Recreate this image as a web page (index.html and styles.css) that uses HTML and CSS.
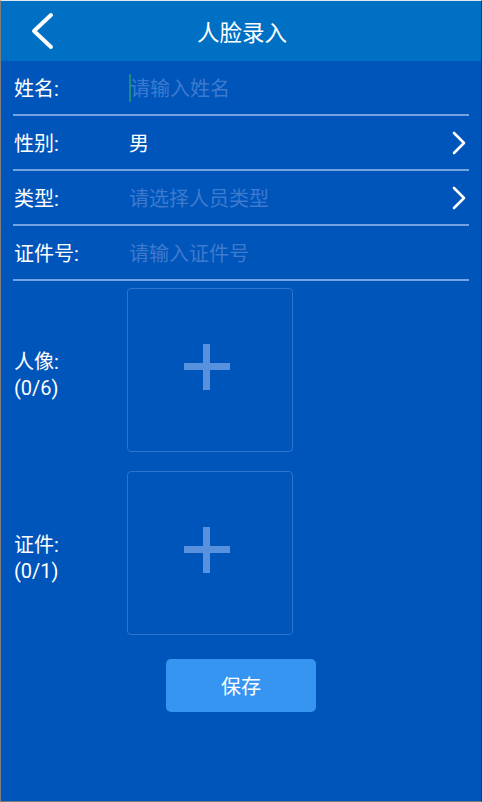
FILE: index.html
```html
<!DOCTYPE html>
<html lang="zh">
<head>
<meta charset="utf-8">
<title>人脸录入</title>
<link rel="stylesheet" href="styles.css">
</head>
<body>
<div class="screen">
  <header class="topbar">
    <span class="back">
      <svg width="26" height="38" viewBox="0 0 26 38"><polyline points="21,3 4,19 21,35" fill="none" stroke="#fff" stroke-width="4" stroke-linecap="round" stroke-linejoin="round"/></svg>
    </span>
    <h1 class="title">人脸录入</h1>
  </header>
  <div class="form">
    <div class="row">
      <span class="label">姓名:</span>
      <span class="value placeholder"><span class="cursor"></span>请输入姓名</span>
    </div>
    <div class="row">
      <span class="label">性别:</span>
      <span class="value">男</span>
      <span class="arrow"><svg width="14" height="24" viewBox="0 0 14 24"><polyline points="2,2 12,12 2,22" fill="none" stroke="#fff" stroke-width="2.6" stroke-linecap="round" stroke-linejoin="round"/></svg></span>
    </div>
    <div class="row">
      <span class="label">类型:</span>
      <span class="value placeholder">请选择人员类型</span>
      <span class="arrow"><svg width="14" height="24" viewBox="0 0 14 24"><polyline points="2,2 12,12 2,22" fill="none" stroke="#fff" stroke-width="2.6" stroke-linecap="round" stroke-linejoin="round"/></svg></span>
    </div>
    <div class="row">
      <span class="label">证件号:</span>
      <span class="value placeholder">请输入证件号</span>
    </div>
    <div class="photos">
      <div class="photo-row">
        <div class="plabel">人像:<br>(0/6)</div>
        <div class="box"><span class="plus"></span></div>
      </div>
      <div class="photo-row">
        <div class="plabel">证件:<br>(0/1)</div>
        <div class="box"><span class="plus"></span></div>
      </div>
    </div>
    <div class="actions">
      <button class="save">保存</button>
    </div>
  </div>
</div>
</body>
</html>
```
FILE: styles.css
```css
* { box-sizing: border-box; }
html, body { margin: 0; padding: 0; }
body {
  font-family: "Roboto", "Noto Sans CJK SC", sans-serif;
  background: #0055bb;
}
.screen {
  width: 482px;
  height: 802px;
  background: #0055bb;
  border-top: 1px solid #dfe6ee;
  border-left: 1px solid #7d7d7d;
  border-right: 1px solid #24385a;
  border-bottom: 1px solid #7a7a7a;
  color: #fff;
}
.topbar {
  height: 60px;
  background: #0070c4;
  display: flex;
  align-items: center;
  justify-content: center;
  position: relative;
}
.back {
  position: absolute;
  left: 29px;
  top: 11px;
  display: flex;
}
.title {
  margin: 0;
  font-size: 22.5px;
  font-weight: normal;
  font-family: "Noto Sans CJK SC", sans-serif;
  padding-left: 2px;
}
.form {
  padding: 0 12px;
}
.row {
  height: 55px;
  border-bottom: 2px solid #74a3e2;
  display: flex;
  align-items: center;
  font-size: 20px;
  font-family: "Roboto", "Noto Sans CJK SC", sans-serif;
}
.label {
  width: 116px;
  padding-left: 1px;
  flex: none;
}
.value {
  flex: 1;
  display: flex;
  align-items: center;
}
.placeholder { color: #3d7acd; }
.cursor {
  display: inline-block;
  width: 2px;
  height: 28px;
  background: #1f8a78;
  margin-right: -1px;
}
.arrow {
  display: flex;
  margin-right: 3px;
}
.photos {
  padding-top: 7px;
  display: flex;
  flex-direction: column;
  gap: 19px;
}
.photo-row {
  display: flex;
  align-items: center;
}
.plabel {
  width: 114px;
  padding-left: 1px;
  padding-top: 10px;
  font-size: 20px;
  line-height: 26px;
  font-family: "Roboto", "Noto Sans CJK SC", sans-serif;
}
.box {
  width: 166px;
  height: 164px;
  border: 1px solid #2f73cf;
  border-radius: 4px;
  display: flex;
  align-items: center;
  justify-content: center;
  position: relative;
}
.plus {
  position: relative;
  width: 46px;
  height: 46px;
  margin-left: -6px;
  margin-top: -7px;
}
.plus::before, .plus::after {
  content: "";
  position: absolute;
  background: #5891de;
}
.plus::before { left: 0; top: 19px; width: 46px; height: 7px; }
.plus::after { left: 19px; top: 0; width: 7px; height: 46px; }
.actions {
  display: flex;
  justify-content: center;
  padding-top: 24px;
}
.save {
  width: 150px;
  height: 53px;
  border: none;
  border-radius: 5px;
  background: #3595f0;
  color: #fff;
  font-size: 20px;
  font-family: "Noto Sans CJK SC", sans-serif;
}
```
